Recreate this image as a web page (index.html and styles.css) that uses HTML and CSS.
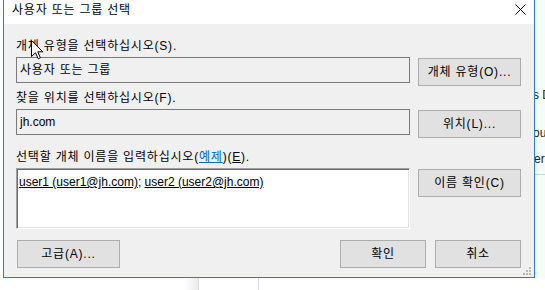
FILE: index.html
```html
<!DOCTYPE html>
<html lang="ko">
<head>
<meta charset="utf-8">
<title>사용자 또는 그룹 선택</title>
<link rel="stylesheet" href="styles.css">
</head>
<body>
<div class="desktop">
  <div class="behind-right">
    <span class="frag frag1">s D</span>
    <span class="frag frag2">ou<b>|</b></span>
    <span class="frag frag3">er:</span>
    <span class="behind-line"></span>
  </div>
  <div class="behind-bottom">
    <span class="shade"></span>
    <span class="vline vline1"></span>
    <span class="vline vline2"></span>
  </div>

  <div class="dialog">
    <div class="titlebar">
      <span class="title ko">사용자 또는 그룹 선택</span>
      <svg class="close" width="11" height="11" viewBox="0 0 11 11">
        <path d="M0.5 0.5 L10.5 10.5 M10.5 0.5 L0.5 10.5" stroke="#000" stroke-width="1" fill="none"/>
      </svg>
    </div>
    <div class="body">
      <div class="group g1">
        <div class="label ko">개체 유형을 선택하십시오(S).</div>
        <div class="row">
          <div class="field ko">사용자 또는 그룹</div>
          <div class="btn ko">개체 유형(O)...</div>
        </div>
      </div>
      <div class="group g2">
        <div class="label ko">찾을 위치를 선택하십시오(F).</div>
        <div class="row">
          <div class="field">jh.com</div>
          <div class="btn ko">위치(L)...</div>
        </div>
      </div>
      <div class="group g3">
        <div class="label ko">선택할 개체 이름을 입력하십시오(<span class="link">예제</span>)(<u>E</u>).</div>
        <div class="row">
          <div class="names"><u>user1 (user1@jh.com)</u>; <u>user2 (user2@jh.com)</u></div>
          <div class="btn ko">이름 확인(C)</div>
        </div>
      </div>
      <div class="actions">
        <div class="btn ko wide">고급(A)...</div>
        <div class="spacer"></div>
        <div class="btn ko small">확인</div>
        <div class="btn ko small">취소</div>
      </div>
      <svg class="grip" width="9" height="9" viewBox="0 0 9 9">
        <rect x="6" y="0" width="2" height="2" fill="#b8b8b8"/>
        <rect x="3" y="3" width="2" height="2" fill="#b8b8b8"/>
        <rect x="6" y="3" width="2" height="2" fill="#b8b8b8"/>
        <rect x="0" y="6" width="2" height="2" fill="#b8b8b8"/>
        <rect x="3" y="6" width="2" height="2" fill="#b8b8b8"/>
        <rect x="6" y="6" width="2" height="2" fill="#b8b8b8"/>
      </svg>
    </div>
  </div>

  <svg class="cursor" width="13" height="20" viewBox="0 0 13 20">
    <path d="M0.5 0.5 L0.5 16.5 L4.5 12.8 L7.2 18.8 L9.4 17.8 L6.8 11.8 L11.8 11.8 Z" fill="#fff" stroke="#000" stroke-width="1" stroke-linejoin="miter"/>
  </svg>
</div>
</body>
</html>
```
FILE: styles.css
```css
* { box-sizing: border-box; }

html, body {
  margin: 0;
  padding: 0;
  background: #ffffff;
}

body {
  font-family: "Liberation Sans", "Noto Sans CJK KR", sans-serif;
  font-size: 12px;
  color: #000;
}

.ko { letter-spacing: 0.8px; }

.desktop {
  position: relative;
  width: 545px;
  height: 290px;
  overflow: hidden;
  background: #ffffff;
}

/* content of the window behind the dialog */
.behind-right {
  position: absolute;
  left: 535px;
  top: 0;
  width: 10px;
  height: 290px;
  background: #f8fbf5;
  overflow: hidden;
}
.frag {
  position: absolute;
  left: 0;
  font-size: 12px;
  line-height: 14px;
  white-space: nowrap;
  color: #222;
}
.frag1 { top: 88px; left: -2px; }
.frag2 { top: 126px; left: -2px; }
.frag2 b { color: #e08a00; font-weight: normal; }
.frag3 { top: 152px; left: -1px; }
.behind-line {
  position: absolute;
  left: 0;
  top: 174px;
  width: 10px;
  height: 1px;
  background: #cfcfcf;
}
.behind-bottom {
  position: absolute;
  left: 0;
  top: 278px;
  width: 545px;
  height: 12px;
  background: #ffffff;
}
.shade {
  position: absolute;
  left: 184px;
  top: 0;
  width: 14px;
  height: 12px;
  background: linear-gradient(to right, #ffffff, #ececec);
}
.vline {
  position: absolute;
  top: 0;
  width: 1px;
  height: 12px;
  background: #dcdcdc;
}
.vline1 { left: 198px; }
.vline2 { left: 258px; }

/* dialog */
.dialog {
  position: absolute;
  left: 3px;
  top: 0;
  width: 532px;
  height: 278px;
  border: 1px solid #1883d7;
  border-top: 0;
  display: flex;
  flex-direction: column;
}

.titlebar {
  height: 24px;
  background: #ffffff;
  display: flex;
  justify-content: space-between;
  align-items: flex-start;
  padding-left: 8px;
}
.title {
  line-height: 20px;
  white-space: nowrap;
}
.close {
  margin-top: 4px;
  margin-right: 8px;
}

.body {
  position: relative;
  flex: 1;
  background: #f0f0f0;
  padding: 14px 13px 0 12px;
}

.label {
  height: 16px;
  line-height: 16px;
  margin-bottom: 3px;
  white-space: nowrap;
}
.g2 { margin-top: 4px; }
.g3 { margin-top: 11px; }

.row {
  display: grid;
  grid-template-columns: 394px 103px;
  column-gap: 8px;
  align-items: start;
}

.field {
  height: 26px;
  border: 1px solid #7a7a7a;
  background: #f0f0f0;
  padding: 0 3px;
  line-height: 24px;
  white-space: nowrap;
}

.names {
  height: 61px;
  background: #ffffff;
  border: 1px solid;
  border-color: #a0a0a0 #ffffff #ffffff #a0a0a0;
  box-shadow: inset 1px 1px 0 #696969, inset -1px -1px 0 #e3e3e3;
  padding: 5px 2px 0 2px;
  line-height: 16px;
  white-space: nowrap;
}

.btn {
  height: 28px;
  margin-top: 1px;
  border: 1px solid #adadad;
  background: #e1e1e1;
  text-align: center;
  line-height: 26px;
  white-space: nowrap;
}

.link {
  color: #0066cc;
  text-decoration: underline;
}

.actions {
  display: flex;
  gap: 9px;
  margin-top: 11px;
}
.actions .btn { margin-top: 0; }
.btn.wide { width: 103px; margin-left: 1px; }
.btn.small { width: 86px; }
.spacer { flex: 1; }

.grip {
  position: absolute;
  right: 2px;
  bottom: 1px;
}

.cursor {
  position: absolute;
  left: 31px;
  top: 40px;
}
```
